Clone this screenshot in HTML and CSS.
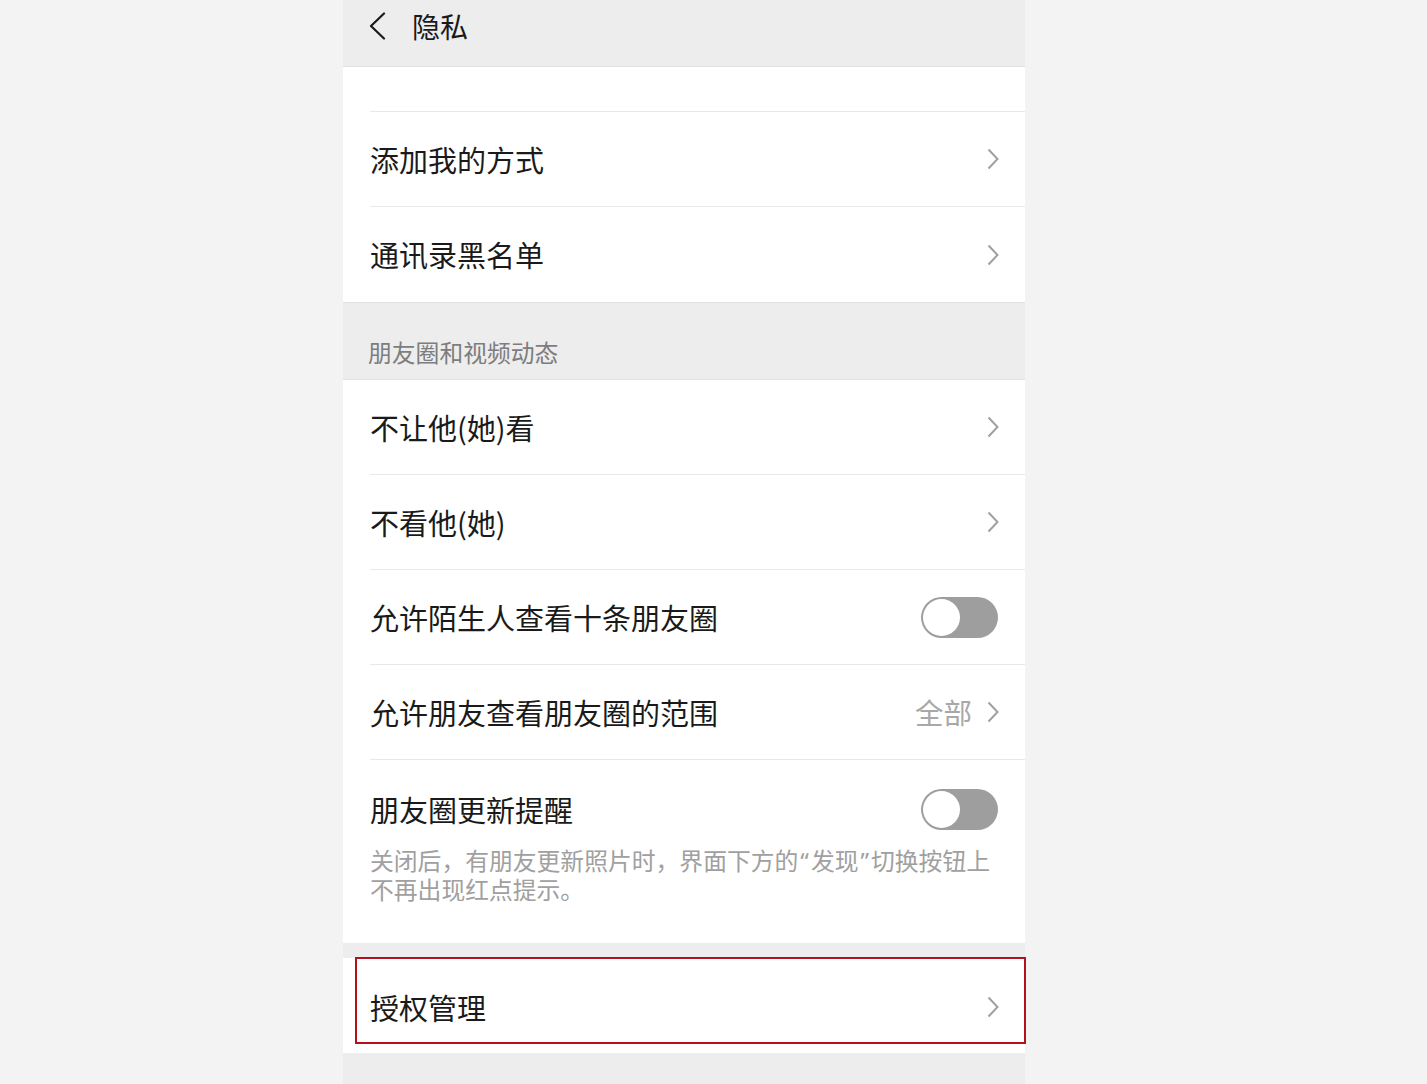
FILE: index.html
```html
<!DOCTYPE html>
<html lang="zh-CN">
<head>
<meta charset="utf-8">
<title>隐私</title>
<link rel="stylesheet" href="styles.css">
</head>
<body>
<div class="phone">
  <header class="topbar">
    <svg class="back" width="18" height="28" viewBox="0 0 18 28"><path d="M16 1.5 L3 14 L16 26.5" fill="none" stroke="#1a1a1a" stroke-width="2.2" stroke-linecap="round" stroke-linejoin="round"/></svg>
    <span class="title">隐私</span>
  </header>

  <div class="group">
    <div class="row partial"></div>
    <div class="row"><span class="label">添加我的方式</span><span class="chev"></span></div>
    <div class="row last"><span class="label">通讯录黑名单</span><span class="chev"></span></div>
  </div>

  <div class="section-title">朋友圈和视频动态</div>

  <div class="group">
    <div class="row"><span class="label">不让他(她)看</span><span class="chev"></span></div>
    <div class="row"><span class="label">不看他(她)</span><span class="chev"></span></div>
    <div class="row"><span class="label">允许陌生人查看十条朋友圈</span><span class="toggle"><span class="knob"></span></span></div>
    <div class="row"><span class="label">允许朋友查看朋友圈的范围</span><span class="value">全部</span><span class="chev"></span></div>
    <div class="block">
      <div class="row plain"><span class="label">朋友圈更新提醒</span><span class="toggle"><span class="knob"></span></span></div>
      <p class="desc"><span class="line">关闭后，有朋友更新照片时，界面下方的<span class="q">“</span>发现<span class="q">”</span>切换按钮上</span><span class="line">不再出现红点提示。</span></p>
    </div>
  </div>

  <div class="group spaced">
    <div class="row last highlighted"><span class="label">授权管理</span><span class="chev"></span><span class="mark"></span></div>
  </div>
</div>
</body>
</html>
```

FILE: styles.css
```css
html, body {
  margin: 0;
  padding: 0;
  background: #f3f3f3;
  height: 100%;
}
body {
  font-family: "Noto Sans CJK SC", "Noto Sans", sans-serif;
  color: #1a1a1a;
}
.phone {
  margin-left: 343px;
  width: 682px;
  min-height: 1084px;
  background: #ededed;
}
.topbar {
  height: 66px;
  border-bottom: 1px solid #e2e2e2;
  display: flex;
  align-items: center;
  padding-left: 25px;
}
.back {
  display: block;
  margin-top: -14px;
}
.title {
  font-size: 28px;
  margin-left: 26px;
  margin-top: -15px;
  line-height: 1;
}
.group {
  background: #fff;
}
.group.spaced {
  margin-top: 15px;
}
.row {
  position: relative;
  height: 95px;
  box-sizing: border-box;
  display: flex;
  align-items: center;
  margin-left: 27px;
  padding-right: 27px;
  border-bottom: 1px solid #e8e8e8;
}
.row.partial {
  height: 45px;
}
.row.last, .row.plain {
  border-bottom: none;
}
.row.highlighted .label {
  margin-top: 3px;
}
.row.highlighted .chev {
  margin-top: 3px;
}
.label {
  font-size: 29px;
  flex: 1;
  line-height: 1;
}
.value {
  font-size: 28.5px;
  color: #a8a8a8;
  margin-right: 15px;
  line-height: 1;
}
.chev {
  width: 12px;
  height: 22px;
  background: url("data:image/svg+xml;utf8,<svg xmlns='http://www.w3.org/2000/svg' width='12' height='22' viewBox='0 0 12 22'><path d='M1.5 1.5 L10.5 11 L1.5 20.5' fill='none' stroke='%23a0a0a0' stroke-width='2'/></svg>") no-repeat center;
  margin-right: -1px;
}
.toggle {
  position: relative;
  width: 77px;
  height: 41px;
  border-radius: 21px;
  background: #9e9e9e;
}
.knob {
  position: absolute;
  left: 2px;
  top: 2px;
  width: 37px;
  height: 37px;
  border-radius: 50%;
  background: #fff;
}
.section-title {
  height: 78px;
  box-sizing: border-box;
  padding: 35px 0 0 25px;
  font-size: 23.8px;
  line-height: 28px;
  color: #7d7d7d;
  border-top: 1px solid #e2e2e2;
  border-bottom: 1px solid #e2e2e2;
}
.block {
  padding-bottom: 40px;
}
.block .row {
  height: 98px;
}
.desc {
  margin: -12px 20px 0 27px;
  font-size: 23.8px;
  line-height: 28px;
  color: #a0a0a0;
}
.line {
  display: block;
  white-space: nowrap;
}
.q {
  font-family: "Noto Sans", sans-serif;
  padding: 0 2px;
}
.mark {
  position: absolute;
  left: -15px;
  right: -1px;
  top: -1px;
  height: 87px;
  border: 2px solid #b3121d;
  box-sizing: border-box;
  pointer-events: none;
}
```
